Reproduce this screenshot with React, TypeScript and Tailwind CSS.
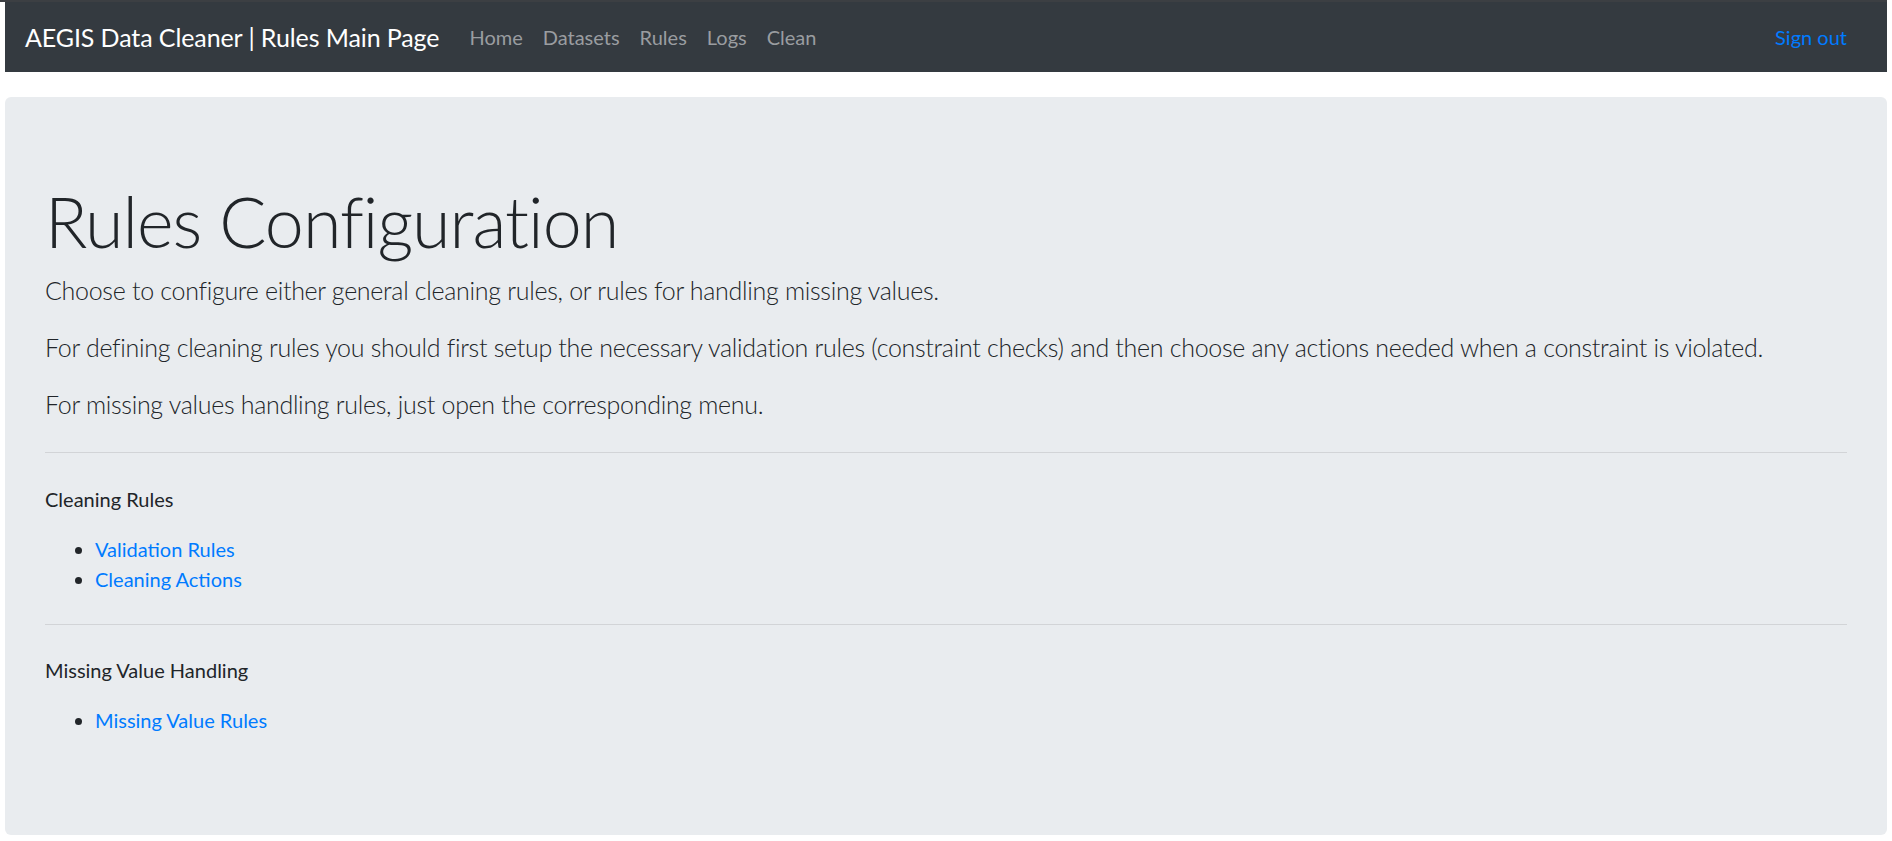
const navLinks = ["Home", "Datasets", "Rules", "Logs", "Clean"];

const Section = ({ title, items, gap }: { title: string; items: string[]; gap: string }) => (
  <div className="flex flex-col">
    <p className={`text-[20px] leading-[30px] ${gap}`}>{title}</p>
    <ul className="list-disc pl-[50px] mt-[20px] text-[20px] leading-[30px]">
      {items.map((item) => (
        <li key={item}>
          <a href="#" className="text-[#007bff] hover:underline">
            {item}
          </a>
        </li>
      ))}
    </ul>
  </div>
);

const App = () => {
  return (
    <div className="min-h-screen bg-white font-['Lato',sans-serif] text-[#212529]">
      <div className="h-[2px] mr-[5px] bg-[#3c3f43]" />
      <div className="px-[5px]">
        <nav className="flex items-center h-[70px] bg-[#343a40] pl-[20px] pr-[30px]">
          <a href="#" className="text-[25px] leading-[30px] tracking-[-0.1px] text-white mr-[20px] whitespace-nowrap">
            AEGIS Data Cleaner | Rules Main Page
          </a>
          {navLinks.map((link) => (
            <a key={link} href="#" className="px-[10px] text-[20px] leading-[30px] text-[#9a9da0] hover:text-white">
              {link}
            </a>
          ))}
          <a href="#" className="ml-auto px-[10px] text-[20px] leading-[30px] text-[#007bff]">
            Sign out
          </a>
        </nav>

        <div className="mt-[25px] flex flex-col rounded-[6px] bg-[#e9ecef] px-[40px] pt-[82px] pb-[100px]">
          <h1 className="text-[70px] leading-[84px] font-light tracking-[-1px] mb-[9px]">Rules Configuration</h1>
          <p className="text-[25px] leading-[37px] font-light tracking-[-0.3px] mb-[20px]">
            Choose to configure either general cleaning rules, or rules for handling missing values.
          </p>
          <p className="text-[25px] leading-[37px] font-light tracking-[-0.3px] mb-[20px] whitespace-nowrap">
            For defining cleaning rules you should first setup the necessary validation rules (constraint checks) and then choose any actions needed when a constraint is violated.
          </p>
          <p className="text-[25px] leading-[37px] font-light tracking-[-0.3px]">
            For missing values handling rules, just open the corresponding menu.
          </p>

          <hr className="mt-[29px] border-0 border-t border-[#d2d4d7]" />
          <Section title="Cleaning Rules" items={["Validation Rules", "Cleaning Actions"]} gap="mt-[31px]" />

          <hr className="mt-[30px] border-0 border-t border-[#d2d4d7]" />
          <Section title="Missing Value Handling" items={["Missing Value Rules"]} gap="mt-[30px]" />
        </div>
      </div>
    </div>
  );
};

export default App;
